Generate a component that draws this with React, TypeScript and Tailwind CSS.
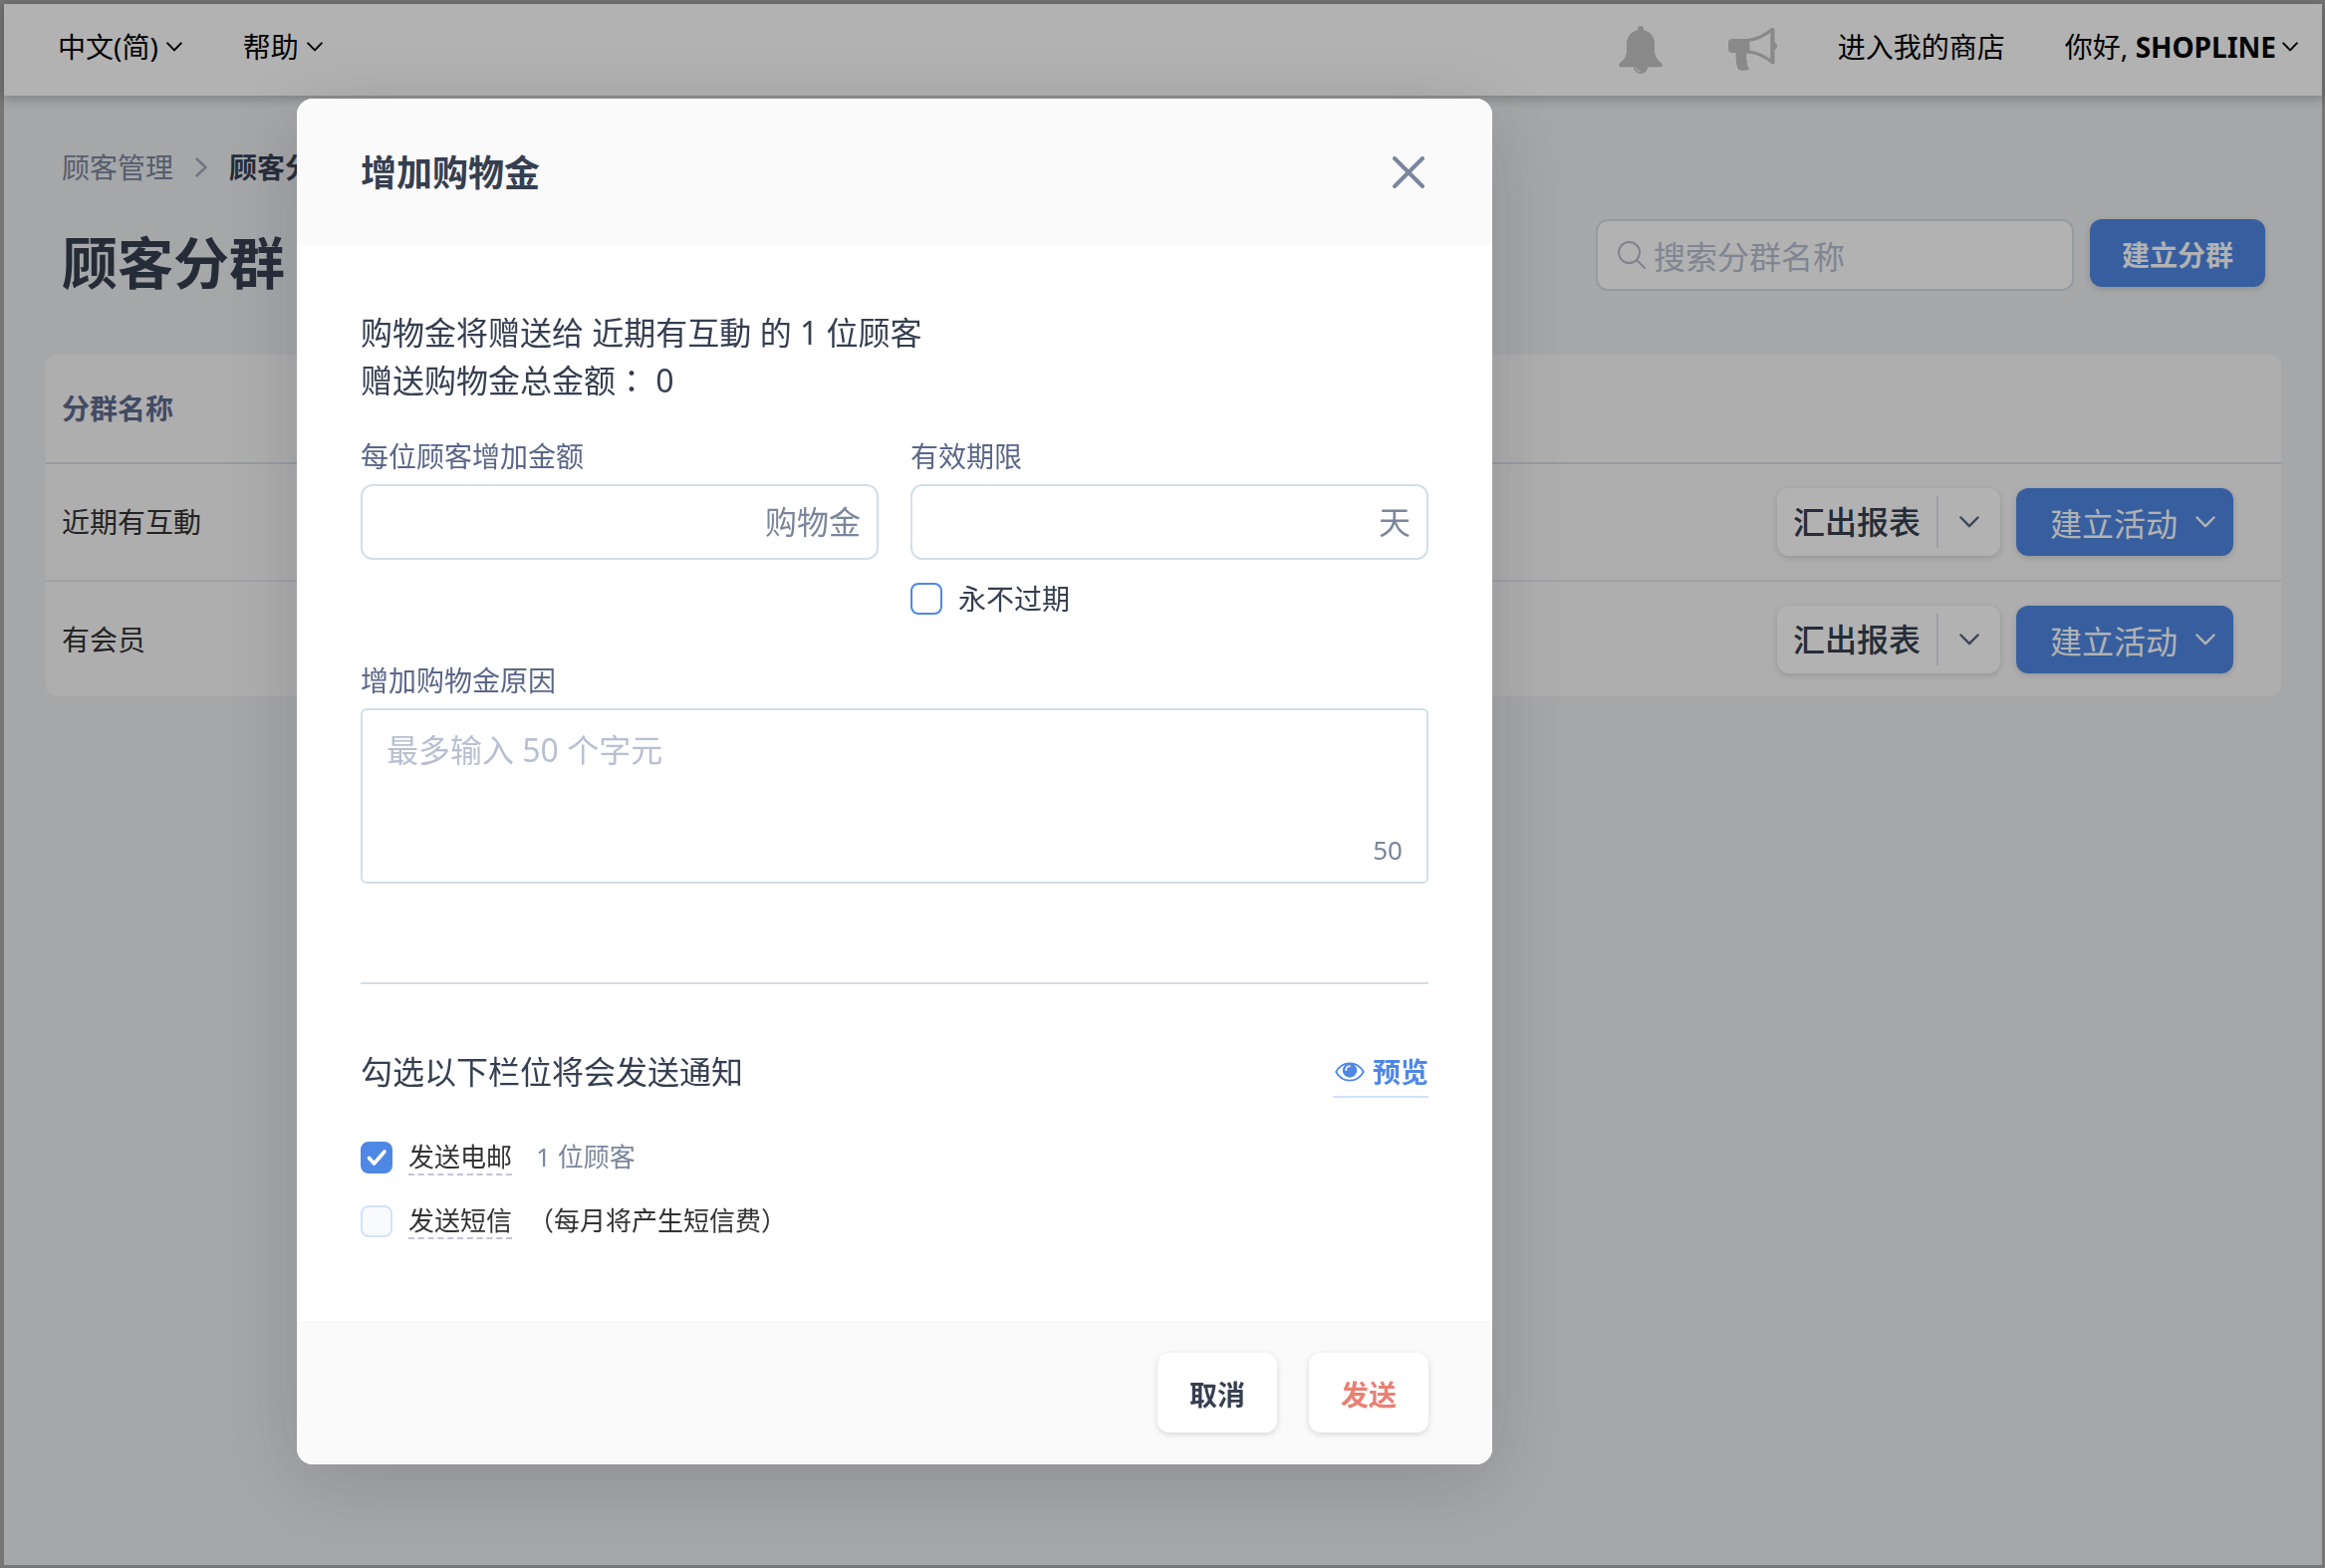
import React from "react";

function Chevron({ className, width = 2 }: { className: string; width?: number }) {
  return (
    <svg viewBox="0 0 20 12" fill="none" stroke="currentColor" strokeWidth={width} strokeLinecap="round" strokeLinejoin="round" className={className} aria-hidden="true">
      <path d="M1.5 1.5 10 10.2l8.5-8.7" />
    </svg>
  );
}

function BellIcon() {
  return (
    <svg viewBox="0 0 50 48" className="h-12 w-[50px] text-[#c4c4c4]" fill="currentColor" aria-hidden="true">
      <path d="M22 0a3 3 0 0 1 3 3v1.200C32 5.600 36 11 36 18v7c0 5.500 3 9 7 12.600 1.700 1.700.8 3.700-1.200 3.700H2.200C.2 41.300-.7 39.300 1 37.600 5 34 8 30.500 8 25v-7C8 11 12 5.600 19 4.200V3a3 3 0 0 1 3-3Z" />
      <path d="M15 40h14v1.500a7 6.500 0 0 1-14 0Z" />
      <path d="M17 42c.6 2 2 3.300 4.500 3.800" fill="none" stroke="#f4f4f4" strokeWidth="1.200" strokeLinecap="round" />
    </svg>
  );
}

function MegaphoneIcon() {
  return (
    <svg viewBox="0 0 50 44" className="h-11 w-[50px] text-[#c4c4c4]" fill="currentColor" aria-hidden="true">
      <path d="M4 11h17.500v14H4a4 4 0 0 1-4-4v-6a4 4 0 0 1 4-4Z" />
      <path d="M20 12.200c9-.7 17-5 24-10.700v33c-7-5.800-15-10-24-10.600" fill="none" stroke="currentColor" strokeWidth="3" strokeLinejoin="round" />
      <path d="M42.500 2a2 2 0 0 1 4 0v32.500a2 2 0 0 1-4 0Z" />
      <path d="M46 14.500a3.800 3.800 0 0 1 0 7.400Z" />
      <path d="M7.500 24H20l-2 3.500v4l1.200 2-.8 2.500c.6 2 2.600 4.500 2.600 5-1.500 2-8.500 2.500-11 .5C8 39 7.500 30 7.500 24Z" />
    </svg>
  );
}

function SearchIcon() {
  return (
    <svg viewBox="0 0 28 28" fill="none" stroke="currentColor" strokeWidth="2" strokeLinecap="round" className="pointer-events-none absolute left-[22px] top-[22px] h-7 w-7 text-[#b7bccb]" aria-hidden="true">
      <circle cx="11.500" cy="11.500" r="10.500" />
      <path d="m19 19 8 8" />
    </svg>
  );
}

function EyeIcon() {
  return (
    <svg viewBox="0 0 30 20" className="h-5 w-[30px]" fill="none" aria-hidden="true">
      <path d="M1.200 10C4 5 9 1.400 15 1.400S26 5 28.800 10C26 15 21 18.600 15 18.600S4 15 1.200 10Z" stroke="currentColor" strokeWidth="1.800" strokeLinejoin="round" />
      <circle cx="15" cy="8.500" r="7.200" fill="currentColor" />
      <path d="M11.200 8.200c0-2.400 1.500-4 3.800-4" stroke="#fff" strokeWidth="1.600" strokeLinecap="round" />
    </svg>
  );
}

function Checkbox({ id, checked, disabled }: { id: string; checked?: boolean; disabled?: boolean }) {
  return (
    <span className="relative block h-8 w-8 shrink-0">
      <input
        id={id}
        type="checkbox"
        defaultChecked={checked}
        disabled={disabled}
        className="peer block h-8 w-8 appearance-none rounded-lg border-2 border-[#4f88e4] bg-white checked:bg-[#4f88e4] disabled:border-[#d2e1fc] disabled:bg-[#f8fafe]"
      />
      <svg viewBox="0 0 32 32" fill="none" stroke="#fff" strokeWidth="3.600" strokeLinejoin="round" strokeLinecap="round" className="pointer-events-none absolute inset-0 hidden h-8 w-8 peer-checked:block" aria-hidden="true">
        <path d="m8.500 16.500 5 5.500L24 10" />
      </svg>
    </span>
  );
}

function AmountField({ id, label, unit, children }: { id: string; label: string; unit: string; children?: React.ReactNode }) {
  return (
    <div className="flex-1">
      <label htmlFor={id} className="block text-[28px] leading-10 text-[#5b6788]">{label}</label>
      <div className="relative mt-2">
        <input id={id} type="text" className="block h-[76px] w-full rounded-xl border-2 border-[#d3dfe8] bg-white pl-6 pr-32 text-[32px]" />
        <span className="pointer-events-none absolute inset-y-0 right-[18px] flex items-center text-[32px] text-[#7b869b]">{unit}</span>
      </div>
      {children}
    </div>
  );
}

const segments = ["近期有互動", "有会员"];

function TopBar() {
  return (
    <header className="relative flex h-[92px] items-center justify-between bg-white pl-[54px] pr-6 text-[28px] leading-10 text-black shadow-[0_2px_10px_2px_rgba(0,0,0,0.22)]">
      <nav className="flex items-center gap-[61px] pb-1.5">
        <button type="button" className="flex items-center gap-2">中文(简)<Chevron className="h-[10px] w-4" width={2.5} /></button>
        <button type="button" className="flex items-center gap-2">帮助<Chevron className="h-[10px] w-4" width={2.5} /></button>
      </nav>
      <div className="flex items-center gap-[60px]">
        <button type="button" aria-label="通知"><BellIcon /></button>
        <button type="button" aria-label="公告"><MegaphoneIcon /></button>
        <a href="#store" className="pb-1.5">进入我的商店</a>
        <button type="button" className="flex items-center gap-1.5 pb-1.5">
          <span>你好, <b>SHOPLINE</b></span>
          <Chevron className="h-[10px] w-4" width={2.5} />
        </button>
      </div>
    </header>
  );
}

function SegmentTable() {
  return (
    <div className="ml-[42px] mr-[41px] mt-[63px] overflow-hidden rounded-xl bg-[#f9f9f9]">
      <table className="w-full border-collapse text-left text-[28px] leading-10">
        <thead>
          <tr className="h-[109px] border-b-2 border-[#d3dfe8]">
            <th scope="col" className="pl-4 font-bold text-[#5f6c8e]">分群名称</th>
            <th scope="col" aria-label="操作" />
          </tr>
        </thead>
        <tbody>
          {segments.map((name) => (
            <tr key={name} className="h-[118px] border-b-2 border-[#e3e8ef] last:h-[116px] last:border-b-0">
              <td className="pl-4 text-[#333]">{name}</td>
              <td className="pr-12">
                <div className="flex justify-end gap-4">
                  <div className="flex h-[68px] items-center rounded-xl bg-white shadow-[0_2px_6px_rgba(0,0,0,0.14)]">
                    <button type="button" className="px-4 text-[32px] font-medium text-[#363f50]">汇出报表</button>
                    <span className="h-[52px] w-0.5 bg-[#dfe5ec]" />
                    <button type="button" aria-label="更多汇出选项" className="px-[21px] py-4 text-[#5b6780]"><Chevron className="h-3 w-5" width={2.5} /></button>
                  </div>
                  <button type="button" className="flex h-[68px] items-center gap-[18px] rounded-xl bg-[#4f88e4] pl-[34px] pr-[18px] text-[32px] text-white shadow-[0_2px_6px_rgba(0,0,0,0.14)]">
                    <span className="pt-1">建立活动</span>
                    <Chevron className="h-3 w-5" width={2.5} />
                  </button>
                </div>
              </td>
            </tr>
          ))}
        </tbody>
      </table>
    </div>
  );
}

function CreditDialog() {
  return (
    <section role="dialog" aria-modal="true" aria-labelledby="dialog-title" className="w-full max-w-[1200px] self-start overflow-hidden rounded-2xl bg-white shadow-[0_16px_80px_rgba(50,50,70,0.22)]">
      <header className="flex h-[147px] items-center justify-between bg-[#fafafa] px-16">
        <h2 id="dialog-title" className="pt-0.5 text-4xl font-bold text-[#363f50]">增加购物金</h2>
        <button type="button" aria-label="关闭" className="p-1 text-[#7b869b]">
          <svg viewBox="0 0 32 32" className="h-8 w-8" fill="none" stroke="currentColor" strokeWidth="4" strokeLinecap="round" aria-hidden="true">
            <path d="m2 2 28 28M30 2 2 30" />
          </svg>
        </button>
      </header>

      <form className="px-16 pb-[82px] pt-16">
        <p className="text-[32px] leading-[48px] text-[#363f50]">
          购物金将赠送给 近期有互動 的 1 位顾客
          <br />
          赠送购物金总金额<span className="font-['Noto_Sans_CJK_TC',sans-serif] leading-none" lang="zh-TW">：</span> 0
        </p>

        <div className="mt-8 flex gap-8">
          <AmountField id="amount" label="每位顾客增加金额" unit="购物金" />
          <AmountField id="expiry" label="有效期限" unit="天">
            <div className="mt-[23px] flex items-center gap-4">
              <Checkbox id="never" />
              <label htmlFor="never" className="text-[28px] leading-8 text-[#363f50]">永不过期</label>
            </div>
          </AmountField>
        </div>

        <label htmlFor="reason" className="mt-[46px] block text-[28px] leading-10 text-[#5b6788]">增加购物金原因</label>
        <div className="relative mt-2">
          <textarea id="reason" placeholder="最多输入 50 个字元" className="block h-44 w-full resize-none rounded-md border-2 border-[#d3dfe8] bg-white px-6 py-4 text-[32px] leading-[48px] placeholder:text-[#b8bfd0]" />
          <span className="pointer-events-none absolute bottom-4 right-[26px] text-[26px] leading-9 text-[#7b869b]">50</span>
        </div>

        <hr className="mt-[99px] border-t-2 border-[#d3dfe8]" />

        <div className="mt-[62px] flex items-center justify-between">
          <h3 className="text-[32px] leading-[48px] text-[#363f50]">勾选以下栏位将会发送通知</h3>
          <a href="#preview" className="flex items-center gap-2 border-b-2 border-[#d2e0fd] pl-[2px] pt-0.5 text-[28px] font-bold leading-[48px] text-[#4f88e4]">
            <EyeIcon />
            预览
          </a>
        </div>

        <div className="mt-[44px] flex items-start text-[26px] leading-[30px] text-[#333]">
          <Checkbox id="email" checked />
          <label htmlFor="email" className="ml-4 border-b-2 border-dashed border-[#c0c5d6] pb-0.5">发送电邮</label>
          <span className="ml-6 text-[#7b869b]">1 位顾客</span>
        </div>
        <div className="mt-[30px] flex items-start text-[26px] leading-[30px] text-[#333]">
          <Checkbox id="sms" disabled />
          <label htmlFor="sms" className="ml-4 border-b-2 border-dashed border-[#c0c5d6] pb-0.5">发送短信</label>
          <span className="ml-4">（每月将产生短信费）</span>
        </div>
      </form>

      <footer className="flex justify-end gap-8 bg-[#fafafa] px-16 py-8 text-[28px] font-bold">
        <button type="button" className="h-20 w-[120px] rounded-xl bg-white pt-1 text-[#363f50] shadow-[0_2px_6px_rgba(0,0,0,0.14)]">取消</button>
        <button type="submit" className="h-20 w-[120px] rounded-xl bg-white pt-1 text-[#e98074] shadow-[0_2px_6px_rgba(0,0,0,0.14)]">发送</button>
      </footer>
    </section>
  );
}

export default function App() {
  return (
    <div lang="zh-CN" className="min-h-screen border-b-[3px] border-l-4 border-r-[3px] border-t-4 border-[#a9a9a9] bg-[#edeff2] font-['Noto_Sans','Noto_Sans_CJK_SC',sans-serif]">
      <TopBar />
      <main>
        <nav aria-label="面包屑" className="flex items-center pl-[58px] pt-[52px] text-[28px] leading-10">
          <a href="#customers" className="text-[#7b869b]">顾客管理</a>
          <svg viewBox="0 0 12 20" className="mx-[22px] h-5 w-3 text-[#a3abba]" fill="none" stroke="currentColor" strokeWidth="2.500" strokeLinecap="round" strokeLinejoin="round" aria-hidden="true">
            <path d="m1.500 1.500 9 8.500-9 8.500" />
          </svg>
          <span className="font-bold text-[#363f50]">顾客分群</span>
        </nav>
        <div className="mt-8 flex items-start justify-between pl-[58px] pr-[57px]">
          <h1 className="pt-[13px] text-[56px] font-bold leading-[60px] text-[#363f50]">顾客分群</h1>
          <div className="flex items-start gap-4">
            <div className="relative">
              <SearchIcon />
              <input type="search" aria-label="搜索分群名称" placeholder="搜索分群名称" className="block h-[72px] w-[480px] rounded-xl border-2 border-[#d3dfe8] bg-white pl-14 pr-4 pt-0.5 text-[32px] placeholder:text-[#b8bfd0]" />
            </div>
            <button type="button" className="h-[68px] w-44 rounded-xl bg-[#4f88e4] pt-1 text-[28px] font-bold text-white shadow-[0_2px_6px_rgba(0,0,0,0.14)]">建立分群</button>
          </div>
        </div>
        <SegmentTable />
      </main>
      <div className="fixed inset-0 flex bg-black/30 pl-[298px] pt-[99px]">
        <CreditDialog />
      </div>
    </div>
  );
}
